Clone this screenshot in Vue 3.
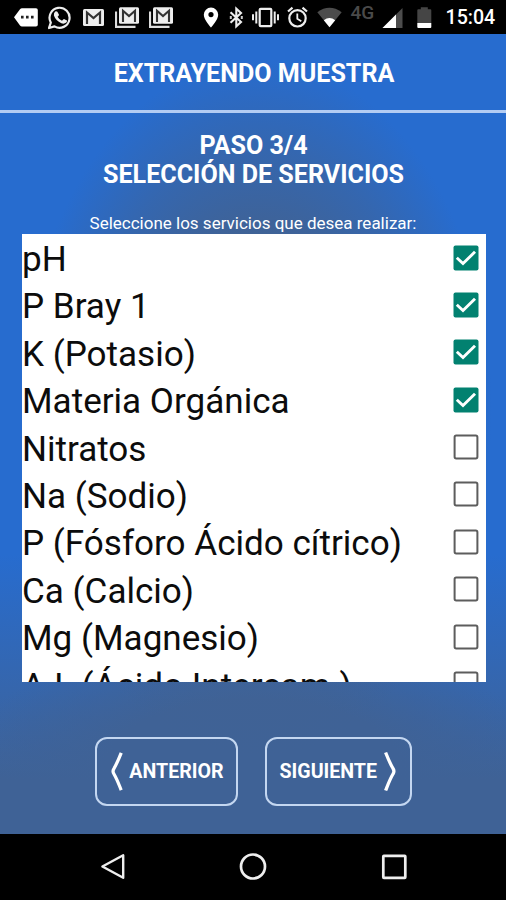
<script setup>
import { ref } from 'vue'

const services = ref([
  { name: 'pH', checked: true },
  { name: 'P Bray 1', checked: true },
  { name: 'K (Potasio)', checked: true },
  { name: 'Materia Orgánica', checked: true },
  { name: 'Nitratos', checked: false },
  { name: 'Na (Sodio)', checked: false },
  { name: 'P (Fósforo Ácido cítrico)', checked: false },
  { name: 'Ca (Calcio)', checked: false },
  { name: 'Mg (Magnesio)', checked: false },
  { name: 'A.I. (Ácido Intercam.)', checked: false },
])
</script>

<template>
  <div class="screen">
    <div class="status">
      <div class="icons left">
        <svg width="24" height="34" viewBox="14 0 24 34">
          <path d="M14 17.3 20 9.2Q20.8 8.2 22 8.2H36Q37.8 8.2 37.8 10V24.8Q37.8 26.6 36 26.6H22Q20.8 26.6 20 25.5Z" fill="#fff" />
          <path d="M21 15.8h2.6v2.6H21zM26 15.8h2.6v2.6H26zM31 15.8h2.6v2.6H31z" fill="#222" />
        </svg>
        <svg width="24" height="34" viewBox="48 0 24 34" class="g10">
          <path d="M49 28 50.8 22.6A10 10 0 1 1 54.5 26.4Z" fill="none" stroke="#eee" stroke-width="2.2" stroke-linejoin="round" />
          <path d="M55.2 11.6Q56.3 10.7 57.4 11.7L59 14.7Q59 15.5 57.6 16.7Q59 19.6 62 20.7Q63.4 19 64 19L67 20.6Q67.4 21.3 66.3 22.5Q64 24.4 61.4 23.2Q55.8 21 53.9 15.6Q53.6 13.2 55.2 11.6Z" fill="#eee" />
        </svg>
        <svg width="22" height="34" viewBox="83 0 22 34" class="g11">
          <rect x="83" y="9" width="21" height="17" rx="1.5" fill="#eee" />
          <path d="M87 24V12.5L93.5 18 100 12.5V24" fill="none" stroke="#333" stroke-width="2.2" />
        </svg>
        <svg v-for="n in 2" :key="n" width="24" height="34" viewBox="115 0 24 34" class="g10">
          <path d="M116 11.5V26.8H135.5" fill="none" stroke="#ddd" stroke-width="2.2" />
          <rect x="119" y="7.3" width="20" height="16.5" rx="1.5" fill="#eee" />
          <path d="M123 22V10.8L129 16 135 10.8V22" fill="none" stroke="#333" stroke-width="2.1" />
        </svg>
      </div>
      <div class="icons right">
        <svg width="16" height="34" viewBox="202.5 0 16 34">
          <path fill-rule="evenodd" d="M210.5 7.6A7.2 7.2 0 0 0 203.3 14.8C203.3 20 210.5 27.6 210.5 27.6S217.7 20 217.7 14.8A7.2 7.2 0 0 0 210.5 7.6ZM210.5 12a2.6 2.6 0 1 1 0 5.2a2.6 2.6 0 0 1 0-5.2Z" fill="#fff" />
        </svg>
        <svg width="14" height="34" viewBox="228 0 14 34" class="g10">
          <path d="M229.5 12.3 240 22 235.3 26.3V8.7L240 13 229.5 22.7" fill="none" stroke="#eee" stroke-width="2.1" />
          <path d="M228.8 16h2v3h-2zM239.8 16h2v3h-2z" fill="#ccc" />
        </svg>
        <svg width="27" height="34" viewBox="251.5 0 27 34" class="g9">
          <rect x="259.2" y="8.8" width="11.6" height="17.4" rx="1" fill="none" stroke="#eee" stroke-width="2.2" />
          <path d="M255.8 11.5v12M274.2 11.5v12M252.5 14.3v6M277.5 14.3v6" stroke="#eee" stroke-width="2" />
        </svg>
        <svg width="21" height="34" viewBox="286.5 0 21 34" class="g8">
          <circle cx="297" cy="18.3" r="8.2" fill="none" stroke="#eee" stroke-width="2.2" />
          <path d="M287.5 11.5 292 7.7M306.5 11.5 302 7.7" stroke="#eee" stroke-width="2.2" />
          <path d="M296.8 13.5v5.3l4 2.5" fill="none" stroke="#eee" stroke-width="1.8" />
        </svg>
        <svg width="25" height="34" viewBox="316.5 0 25 34" class="g9">
          <path d="M329 27.3 316.8 12.2Q329 3.5 341.2 12.2Z" fill="#4c4c4c" />
          <path d="M329 27.3 323.3 20.2Q329 16 334.7 20.2Z" fill="#fff" />
        </svg>
        <span class="net">4G</span>
        <svg width="21" height="34" viewBox="381.5 0 21 34" class="g7">
          <path d="M402 8V28H382Z" fill="#4c4c4c" />
          <path d="M395.5 14.5V28H382Z" fill="#fff" />
        </svg>
        <svg width="15" height="34" viewBox="416.7 0 15 34" class="g14">
          <path d="M420.5 9.3V7.2h7V9.3H430Q431 9.3 431 10.3V23H417V10.3Q417 9.3 418 9.3Z" fill="#454545" />
          <path d="M417 23H431V27Q431 28 430 28H418Q417 28 417 27Z" fill="#fff" />
        </svg>
        <span class="clock">15:04</span>
      </div>
    </div>

    <main class="app">
      <header class="bar"><h1>EXTRAYENDO MUESTRA</h1></header>
      <h2><span class="step">PASO 3/4</span><span class="sel">SELECCIÓN DE SERVICIOS</span></h2>
      <p class="hint"><span>Seleccione los servicios que desea realizar:</span></p>
      <ul class="list">
        <li v-for="s in services" :key="s.name" @click="s.checked = !s.checked">
          <span class="name">{{ s.name }}</span>
          <svg class="check" width="26" height="26" viewBox="0 0 26 26">
            <template v-if="s.checked">
              <rect x="0.5" y="0.5" width="25" height="25" rx="2" fill="#028170" />
              <path d="M3.8 12.8 10 18.6 22 6.8" fill="none" stroke="#fff" stroke-width="2.9" />
            </template>
            <rect v-else x="1.6" y="1.6" width="22.8" height="22.8" rx="1.6" fill="none" stroke="#5d5d5d" stroke-width="2" />
          </svg>
        </li>
      </ul>
      <div class="actions">
        <button class="btn prev">
          <svg width="14" height="42" viewBox="0 0 14 42"><path d="M11.4 1.5C8.6 8.5 7 12.5 4 17.5Q2.2 20.2 4 23C7 28 8.6 32.5 11.4 39.5" fill="none" stroke="#fff" stroke-width="3.3" /></svg>
          <span>ANTERIOR</span>
        </button>
        <button class="btn next">
          <span>SIGUIENTE</span>
          <svg width="14" height="42" viewBox="0 0 14 42"><path d="M2.6 1.5C5.4 8.5 7 12.5 10 17.5Q11.8 20.2 10 23C7 28 5.4 32.5 2.6 39.5" fill="none" stroke="#fff" stroke-width="3.3" /></svg>
        </button>
      </div>
    </main>

    <nav class="nav">
      <svg width="28" height="30" viewBox="0 0 28 30"><path d="M24.2 3.2V25.8L3.4 14.5Z" fill="none" stroke="#eee" stroke-width="2.4" stroke-linejoin="round" /></svg>
      <svg width="28" height="30" viewBox="0 0 28 30"><circle cx="14" cy="14.5" r="12" fill="none" stroke="#eee" stroke-width="2.7" /></svg>
      <svg width="28" height="30" viewBox="0 0 28 30"><rect x="3.3" y="3.8" width="22" height="22" rx="0.6" fill="none" stroke="#eee" stroke-width="2.7" /></svg>
    </nav>
  </div>
</template>

<style>
body {
  margin: 0;
  background: #000;
}
</style>

<style scoped>
.screen {
  width: 506px;
  height: 900px;
  display: flex;
  flex-direction: column;
  overflow: hidden;
  background: #000;
  font-family: Roboto, sans-serif;
  color: #fff;
}
.status {
  height: 34px;
  flex: none;
  display: flex;
  justify-content: space-between;
  padding: 0 10.5px 0 14px;
}
.icons {
  display: flex;
}
.icons svg {
  flex: none;
}
.g7 { margin-left: 7px; }
.g8 { margin-left: 8px; }
.g9 { margin-left: 9px; }
.g10 { margin-left: 10px; }
.g11 { margin-left: 11px; }
.g14 { margin-left: 14px; }
.net {
  width: 24px;
  margin-left: 9px;
  font-size: 19px;
  font-weight: 500;
  line-height: 25px;
  color: #4a4a4a;
  white-space: nowrap;
}
.clock {
  width: 50px;
  margin-left: 14px;
  font-size: 19.6px;
  font-weight: 500;
  line-height: 36px;
  white-space: nowrap;
}
.app {
  height: 800px;
  flex: none;
  display: flex;
  flex-direction: column;
  background:
    radial-gradient(ellipse 235px 350px at 257px 375px, rgba(64, 98, 148, 1) 48%, rgba(64, 98, 148, 0.55) 74%, rgba(64, 98, 148, 0) 100%),
    radial-gradient(ellipse 290px 130px at 253px 730px, rgba(63, 98, 150, 1) 50%, rgba(63, 98, 150, 0) 100%),
    linear-gradient(#276ccf 0, #276ccf 520px, #3f6296 745px, #3f6296 100%);
}
.bar {
  box-sizing: border-box;
  height: 79px;
  flex: none;
  border-bottom: 3px solid #b3ccf3;
  display: flex;
  align-items: center;
  justify-content: center;
  padding-top: 4px;
}
h1, h2, p, ul {
  margin: 0;
  padding: 0;
}
h1 {
  font-size: 25.1px;
  line-height: 30px;
  font-weight: 700;
  padding-left: 2px;
  white-space: nowrap;
}
h2 {
  display: flex;
  flex-direction: column;
  align-items: center;
  padding-top: 17.5px;
  padding-left: 1px;
  font-size: 25.1px;
  font-weight: 700;
  line-height: 29.5px;
  white-space: nowrap;
}
.hint {
  display: flex;
  justify-content: center;
  padding-top: 23.5px;
  height: 21px;
  font-size: 17px;
  line-height: 21px;
  white-space: nowrap;
}
.list {
  flex: none;
  width: 464px;
  height: 448px;
  margin-left: 22px;
  overflow: hidden;
  background: #fff;
  color: #0c0c0c;
  list-style: none;
}
li {
  display: flex;
  justify-content: space-between;
  height: 47.4px;
  padding-right: 7px;
}
.name {
  font-size: 35.05px;
  line-height: 51px;
  white-space: nowrap;
}
.check {
  margin-top: 10.5px;
}
.actions {
  display: flex;
  gap: 27px;
  padding: 55px 0 0 95px;
}
.btn {
  box-sizing: border-box;
  height: 69px;
  display: flex;
  align-items: center;
  border: 2px solid #c4d7f1;
  border-radius: 12px;
  background: none;
  color: #fff;
  font-family: inherit;
  font-size: 19.6px;
  font-weight: 700;
  padding: 0 12.5px;
  white-space: nowrap;
}
.prev { width: 143px; gap: 6px; }
.next { width: 147px; gap: 6px; }
.nav {
  flex: 1;
  display: flex;
  justify-content: center;
  gap: 112.5px;
  padding-top: 18px;
}
</style>
